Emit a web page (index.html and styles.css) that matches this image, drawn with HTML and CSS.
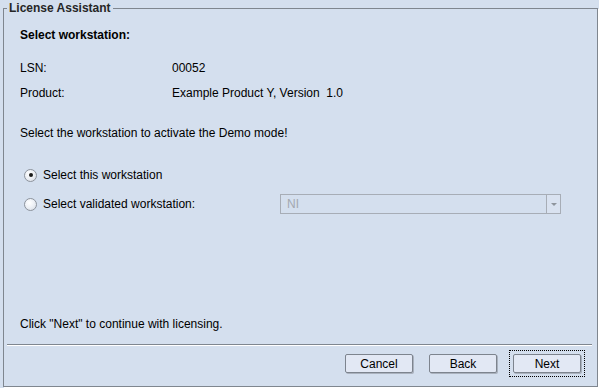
FILE: index.html
```html
<!DOCTYPE html>
<html lang="en">
<head>
<meta charset="utf-8">
<title>License Assistant</title>
<link rel="stylesheet" href="styles.css">
</head>
<body>
<fieldset class="panel">
  <legend class="panel-title">License Assistant</legend>
  <div class="content">
    <div class="main">
      <div class="heading">Select workstation:</div>
      <div class="info">
        <span>LSN:</span><span>00052</span>
        <span>Product:</span><span>Example Product Y, Version&nbsp; 1.0</span>
      </div>
      <p class="instruction">Select the workstation to activate the Demo mode!</p>
      <div class="options">
        <div class="option"><span class="radio checked"></span><span>Select this workstation</span></div>
        <div class="option-row">
          <div class="option"><span class="radio"></span><span>Select validated workstation:</span></div>
          <div class="combo">
            <span class="combo-value">NI</span>
            <span class="combo-arrow"><span class="tri"></span></span>
          </div>
        </div>
      </div>
    </div>
    <div class="hint">Click "Next" to continue with licensing.</div>
    <hr class="separator">
    <div class="buttons">
      <button class="button">Cancel</button>
      <button class="button">Back</button>
      <span class="focus-ring"><button class="button">Next</button></span>
    </div>
  </div>
</fieldset>
</body>
</html>
```
FILE: styles.css
```css
html, body {
  margin: 0;
  height: 388px;
  overflow: hidden;
}
body {
  background: #d4dfee;
  padding: 1px 1px 0 3px;
  box-sizing: border-box;
  font-family: "Liberation Sans", Arial, sans-serif;
  font-size: 12px;
  line-height: 14px;
  color: #000;
}
.panel {
  margin: 0;
  padding: 0;
  min-width: 0;
  height: 386px;
  box-sizing: border-box;
  border: 1px solid #7f868f;
  box-shadow: 1px 1px 0 #fff;
  display: flex;
  flex-direction: column;
}
.panel-title {
  margin-left: 3px;
  padding: 0 2px;
  font-weight: bold;
  color: #262626;
  line-height: 14px;
}
.content {
  flex: 1;
  display: flex;
  flex-direction: column;
  padding: 0 5px 13px 3px;
}
.main {
  flex: 1;
  padding-left: 13px;
}
.heading {
  margin-top: 13px;
  font-weight: bold;
}
.info {
  margin-top: 19px;
  display: grid;
  grid-template-columns: 152px auto;
  row-gap: 11px;
}
.instruction {
  margin: 26px 0 0;
}
.options {
  margin-top: 25px;
  display: flex;
  flex-direction: column;
  gap: 9px;
}
.option {
  display: flex;
  align-items: center;
  height: 20px;
  padding-left: 4px;
  gap: 6px;
}
.radio {
  width: 13px;
  height: 13px;
  box-sizing: border-box;
  border: 1px solid #8d939c;
  border-radius: 50%;
  background: radial-gradient(circle at 40% 35%, #ffffff 0%, #eef1f6 45%, #d3d9e2 100%);
  display: flex;
  align-items: center;
  justify-content: center;
}
.radio.checked::after {
  content: "";
  width: 4px;
  height: 4px;
  border-radius: 50%;
  background: #1a1a1a;
}
.option-row {
  display: grid;
  grid-template-columns: 260px 281px;
  align-items: center;
}
.combo {
  height: 20px;
  box-sizing: border-box;
  border: 1px solid #a7adb6;
  display: flex;
  align-items: center;
}
.combo-value {
  flex: 1;
  padding-left: 6px;
  color: #a3a8b0;
}
.combo-arrow {
  width: 14px;
  height: 18px;
  box-sizing: border-box;
  border-left: 1px solid #a7adb6;
  display: flex;
  align-items: center;
  justify-content: center;
  background: #d9e2f0;
}
.tri {
  width: 0;
  height: 0;
  border-left: 3px solid transparent;
  border-right: 3px solid transparent;
  border-top: 3px solid #8e949c;
}
.hint {
  padding-left: 13px;
}
.separator {
  margin: 13px 0 0;
  height: 0;
  border: 0;
  border-top: 1px solid #7f868f;
  border-bottom: 1px solid #fff;
}
.buttons {
  margin-top: 8px;
  padding-right: 11px;
  display: flex;
  justify-content: flex-end;
  align-items: flex-start;
  gap: 16px;
}
.button {
  display: block;
  width: 68px;
  height: 19px;
  box-sizing: border-box;
  padding: 0;
  border: 1px solid #7d848e;
  border-radius: 2px;
  background: #e2e8f4;
  box-shadow: 1px 1px 0 #aab2be;
  font-family: "Liberation Sans", Arial, sans-serif;
  font-size: 12px;
  line-height: 14px;
  color: #000;
}
.focus-ring {
  display: block;
  margin: -4px;
  padding: 3px;
  border: 1px dotted #000;
}
```
